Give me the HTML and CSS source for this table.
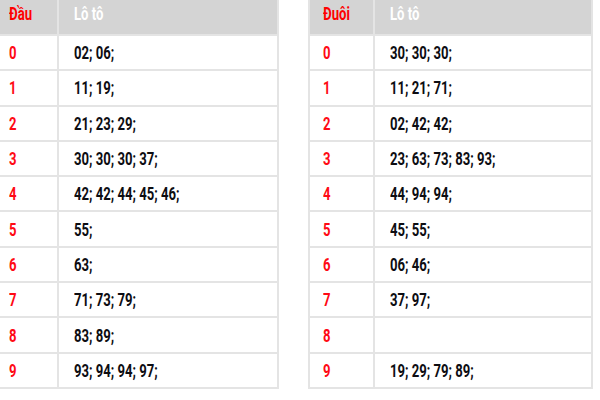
FILE: index.html
```html
<!DOCTYPE html>
<html lang="vi">
<head>
<meta charset="utf-8">
<link rel="stylesheet" href="styles.css">
</head>
<body>
<div class="wrap">
  <table class="lt lt-left">
    <thead><tr><th class="k"><span class="t">Đầu</span></th><th class="v"><span class="t">Lô tô</span></th></tr></thead>
    <tbody>
      <tr><td class="k"><span class="t">0</span></td><td class="v"><span class="t">02; 06;</span></td></tr>
      <tr><td class="k"><span class="t">1</span></td><td class="v"><span class="t">11; 19;</span></td></tr>
      <tr><td class="k"><span class="t">2</span></td><td class="v"><span class="t">21; 23; 29;</span></td></tr>
      <tr><td class="k"><span class="t">3</span></td><td class="v"><span class="t">30; 30; 30; 37;</span></td></tr>
      <tr><td class="k"><span class="t">4</span></td><td class="v"><span class="t">42; 42; 44; 45; 46;</span></td></tr>
      <tr><td class="k"><span class="t">5</span></td><td class="v"><span class="t">55;</span></td></tr>
      <tr><td class="k"><span class="t">6</span></td><td class="v"><span class="t">63;</span></td></tr>
      <tr><td class="k"><span class="t">7</span></td><td class="v"><span class="t">71; 73; 79;</span></td></tr>
      <tr><td class="k"><span class="t">8</span></td><td class="v"><span class="t">83; 89;</span></td></tr>
      <tr><td class="k"><span class="t">9</span></td><td class="v"><span class="t">93; 94; 94; 97;</span></td></tr>
    </tbody>
  </table>
  <table class="lt lt-right">
    <thead><tr><th class="k"><span class="t">Đuôi</span></th><th class="v"><span class="t">Lô tô</span></th></tr></thead>
    <tbody>
      <tr><td class="k"><span class="t">0</span></td><td class="v"><span class="t">30; 30; 30;</span></td></tr>
      <tr><td class="k"><span class="t">1</span></td><td class="v"><span class="t">11; 21; 71;</span></td></tr>
      <tr><td class="k"><span class="t">2</span></td><td class="v"><span class="t">02; 42; 42;</span></td></tr>
      <tr><td class="k"><span class="t">3</span></td><td class="v"><span class="t">23; 63; 73; 83; 93;</span></td></tr>
      <tr><td class="k"><span class="t">4</span></td><td class="v"><span class="t">44; 94; 94;</span></td></tr>
      <tr><td class="k"><span class="t">5</span></td><td class="v"><span class="t">45; 55;</span></td></tr>
      <tr><td class="k"><span class="t">6</span></td><td class="v"><span class="t">06; 46;</span></td></tr>
      <tr><td class="k"><span class="t">7</span></td><td class="v"><span class="t">37; 97;</span></td></tr>
      <tr><td class="k"><span class="t">8</span></td><td class="v"></td></tr>
      <tr><td class="k"><span class="t">9</span></td><td class="v"><span class="t">19; 29; 79; 89;</span></td></tr>
    </tbody>
  </table>
</div>
</body>
</html>
```
FILE: styles.css
```css
html, body {
  margin: 0;
  padding: 0;
  background: #fff;
}
body {
  width: 600px;
  height: 400px;
  overflow: hidden;
  font-family: "Roboto", "Liberation Sans", sans-serif;
  font-size: 19px;
  font-weight: 700;
}
.wrap {
  display: flex;
  gap: 29px;
  margin-left: -8px;
  margin-top: -11px;
}
.lt {
  border-collapse: collapse;
  border: 2px solid #e4e4e4;
  border-top: none;
  table-layout: fixed;
}
.lt-left { width: 287px; }
.lt-right { width: 285px; }
.lt th, .lt td {
  height: 35.3px;
  padding: 0 0 0 15px;
  text-align: left;
  vertical-align: middle;
  border: 2px solid #e4e4e4;
  line-height: 1;
  box-sizing: border-box;
}
.lt-right td.k, .lt-right th.k { padding-left: 13px; }
.lt th {
  background: #d4d4d4;
  font-weight: 700;
  height: 45px;
  padding-top: 2px;
}
.t {
  display: inline-block;
  white-space: nowrap;
  transform: scaleX(0.69);
  transform-origin: 0 50%;
}
.lt th.k { color: #f00; }
.lt th.v { color: #fff; }
.lt .k { width: 65px; }
.lt td.k { color: #ff0a14; }
.lt td.v { color: #0d0d12; }
```
